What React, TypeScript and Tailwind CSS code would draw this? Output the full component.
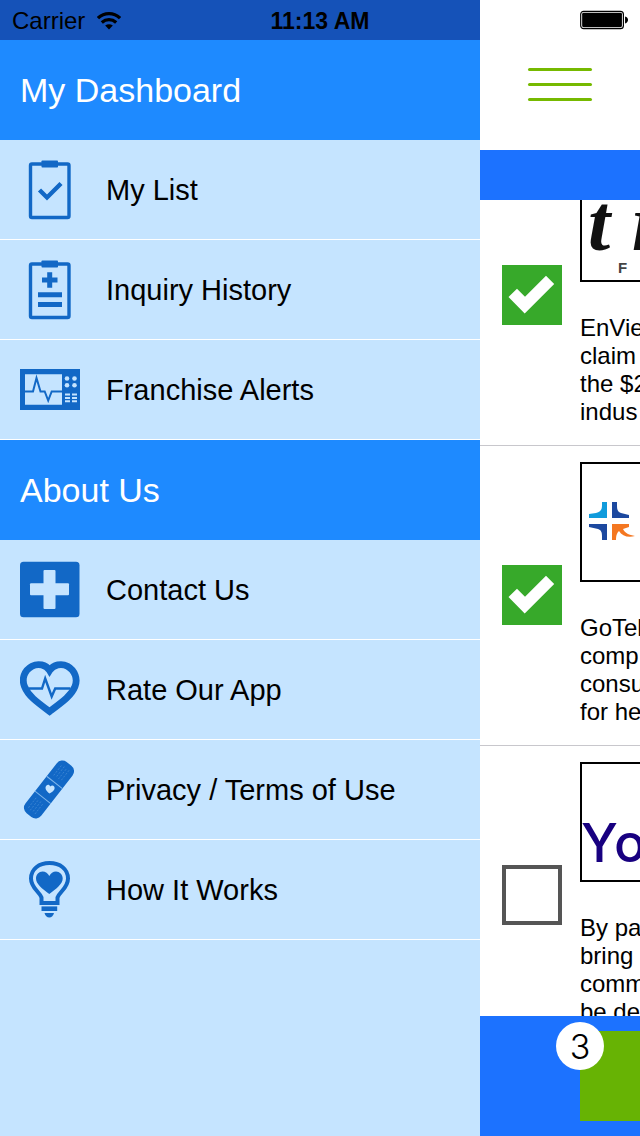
import { useState } from 'react';
import type { ReactNode } from 'react';

function ClipboardFrame({ children }: { children: ReactNode }) {
  return (
    <svg viewBox="0 0 60 60" className="size-15" fill="none" stroke="#1268c6" aria-hidden="true">
      <rect x="10.5" y="4" width="38.5" height="53.5" rx="1.5" strokeWidth="3.4" />
      <rect x="21.5" y="0.5" width="16.5" height="7" rx="0.8" fill="#1268c6" stroke="none" />
      {children}
    </svg>
  );
}

function ListIcon() {
  return (
    <ClipboardFrame>
      <path d="M19.5 30 27 37.5 41 23.5" strokeWidth="4.4" />
    </ClipboardFrame>
  );
}

function HistoryIcon() {
  return (
    <ClipboardFrame>
      <path d="M22 20h15.5M29.7 12.3v15.4M18 34.8h24M18 44.5h24" strokeWidth="5" />
    </ClipboardFrame>
  );
}

function MonitorIcon() {
  return (
    <svg viewBox="0 0 60 60" className="size-15" fill="none" aria-hidden="true">
      <path d="M0 9h60v41H0z" fill="#1268c6" />
      <path d="M5 14.3h37v30.4H5z" fill="#c5e4ff" />
      <path d="M5 31.5h8L16.5 18l4 13.500h4.2l3.500 9 3.500-9H42" stroke="#1268c6" strokeWidth="2" />
      <g fill="#c5e4ff">
        <circle cx="47" cy="18.5" r="2.3" />
        <circle cx="54.5" cy="18.5" r="2.3" />
        <circle cx="47" cy="25.2" r="2.3" />
        <circle cx="54.5" cy="25.2" r="2.3" />
      </g>
      <path
        d="M45 34.5h5M52 34.5h5M45 38h5M52 38h5M45 41.3h5M52 41.3h5"
        stroke="#c5e4ff"
        strokeWidth="2"
      />
    </svg>
  );
}

function ContactIcon() {
  return (
    <svg viewBox="0 0 60 60" className="size-15" aria-hidden="true">
      <rect y="1.7" width="59.5" height="55.5" rx="3.5" fill="#1268c6" />
      <rect x="23.5" y="10" width="12" height="39" rx="1" fill="#c5e4ff" />
      <rect x="10" y="23.2" width="39" height="12" rx="1" fill="#c5e4ff" />
    </svg>
  );
}

function HeartIcon() {
  return (
    <svg viewBox="0 0 60 60" className="size-15" fill="none" stroke="#1268c6" aria-hidden="true">
      <path
        d="M29.6 10.5C26 4.5 18 3 12 6.2 4 10.5 1.5 19 4.5 26.5 8 35.5 16 41.5 29.6 51.5 43 41.5 51.5 35.5 55 26.5 58 19 55 10.5 47.5 6.2 41.5 3 33.5 4.5 29.6 10.5z"
        strokeWidth="6.8"
      />
      <path d="M9 28.5h13l3.200-10 6.500 18 3.500-8h15" strokeWidth="2.4" />
    </svg>
  );
}

function BandageIcon() {
  return (
    <svg viewBox="0 0 60 60" className="size-15" aria-hidden="true">
      <g transform="translate(29 29.5) rotate(-52)">
        <rect x="-32.5" y="-10" width="65" height="20" rx="7" fill="#1268c6" />
        <path d="M-10-10v20M9-10v20" stroke="#7fb5ea" strokeWidth="1" />
        <path
          d="M-27-5h13M-28-2h13M-27 1h13M-28 4h13M14-5h13M15-2h13M14 1h13M15 4h13"
          stroke="#3f87d4"
          strokeWidth="0.8"
          strokeDasharray="2 1.5"
        />
      </g>
      <path d="M29.5 33.5c-4-3-5-6-3-8 1.500-1.300 3-.5 3.800 1 1.200-1.500 3-1.500 4 .2 1.200 2.500-1 4.800-4.800 6.800z" fill="#c5e4ff" />
    </svg>
  );
}

function BulbIcon() {
  return (
    <svg viewBox="0 0 60 60" className="size-15" fill="none" aria-hidden="true">
      <path
        d="M21.5 43v-5.500C19 31 11 28 11 18.500 11 9 19 3 29.500 3S48 9 48 18.500C48 28 40 31 37.500 37.500V43z"
        stroke="#1268c6"
        strokeWidth="4"
      />
      <path
        d="M29.300 34C22 28.500 16 24 16 18.500c0-4 3-7 6.500-7 3 0 5.500 1.800 6.800 4.500 1.300-2.700 3.800-4.500 6.700-4.500 3.500 0 6.700 3 6.700 7C42.700 24 36.500 28.500 29.300 34z"
        fill="#1268c6"
      />
      <path d="M21.5 48.7h15.7" stroke="#1268c6" strokeWidth="4.6" />
      <path d="M24.5 53h9.500c-.5 2.600-2.500 4.500-4.700 4.500S25 55.600 24.500 53z" fill="#1268c6" />
    </svg>
  );
}

const sections = [
  {
    title: 'My Dashboard',
    items: [
      { label: 'My List', icon: <ListIcon /> },
      { label: 'Inquiry History', icon: <HistoryIcon /> },
      { label: 'Franchise Alerts', icon: <MonitorIcon /> },
    ],
  },
  {
    title: 'About Us',
    items: [
      { label: 'Contact Us', icon: <ContactIcon /> },
      { label: 'Rate Our App', icon: <HeartIcon /> },
      { label: 'Privacy / Terms of Use', icon: <BandageIcon /> },
      { label: 'How It Works', icon: <BulbIcon /> },
    ],
  },
];

function EnViewLogo() {
  return (
    <svg viewBox="0 0 64 116" className="h-29 w-16" aria-hidden="true">
      <text x="6 50" y="86" fontSize="80" fontStyle="italic" fontWeight="bold" fontFamily="Liberation Serif, serif" fill="#111">
        tr
      </text>
      <text x="36" y="109" fontSize="15" fontWeight="bold" fontFamily="Liberation Sans, sans-serif" fill="#444">
        F
      </text>
    </svg>
  );
}

function GoTeleLogo() {
  return (
    <svg viewBox="0 0 64 116" className="h-29 w-16" aria-hidden="true">
      <path d="M20 38h5v16H7v-4l7-1c4-1 6-3 6-7z" fill="#109bdc" />
      <path d="M30 38h5v4c0 4 1 6 4 7l8 2v3H30z" fill="#1c489f" />
      <path d="M7 60h18v16h-5v-4c0-4-1-6-4-7l-9-2z" fill="#1c489f" />
      <path d="M30 60h17v3l-6 2c2 4 6 6 12 7-7 2-13 0-16-5-2 2-3 4-3 9h-4z" fill="#f47721" />
    </svg>
  );
}

function YoLogo() {
  return (
    <svg viewBox="0 0 64 116" className="h-29 w-16" aria-hidden="true">
      <text x="-1 32" y="98" fontSize="53" fontWeight="500" fontFamily="Inter, sans-serif" fill="#180080">
        Yo
      </text>
    </svg>
  );
}

const franchises = [
  { name: 'EnView', logo: <EnViewLogo />, lines: ['EnVie', 'claim', 'the $2', 'indus'] },
  { name: 'GoTele', logo: <GoTeleLogo />, lines: ['GoTel', 'comp', 'consu', 'for he'] },
  { name: 'Yo', logo: <YoLogo />, lines: ['By pa', 'bring', 'comm', 'be de'] },
];

function StatusBar() {
  return (
    <div className="absolute inset-x-0 top-0 z-10 grid h-10 grid-cols-3 items-center px-3 text-black">
      <div className="flex items-center gap-3 pt-0.5">
        <span className="text-2xl">Carrier</span>
        <svg viewBox="0 0 25 19" className="h-5 w-6" fill="none" stroke="#000" aria-hidden="true">
          <path d="M1 6.5C7.5.2 17.5.2 24 6.5M5 11c4.500-4 10.500-4 15 0" strokeWidth="3.4" />
          <path d="M8.500 14.300c2.500-2 5.500-2 8 0l-4 4z" fill="#000" stroke="none" />
        </svg>
      </div>
      <span className="pt-0.5 text-center text-[23px] font-bold">11:13 AM</span>
      <svg viewBox="0 0 49 19" className="h-5 w-12 justify-self-end" aria-hidden="true">
        <rect x="0.7" y="0.7" width="43.6" height="17.6" rx="3" fill="none" stroke="#000" strokeWidth="1.2" />
        <rect x="2.2" y="2.2" width="40.6" height="14.6" rx="1.5" />
        <path d="M46 6c4 1 4 6 0 7z" />
      </svg>
    </div>
  );
}

function Drawer() {
  return (
    <nav className="w-3/4 shrink-0 bg-[#c5e4ff]">
      <div className="h-10 bg-[#1552b8]" />
      {sections.map((section) => (
        <section key={section.title}>
          <h2 className="flex h-25 items-center bg-[#1e8aff] px-5 text-[34px] text-white">{section.title}</h2>
          <ul>
            {section.items.map((item) => (
              <li key={item.label} className="border-b border-white">
                <a href="#" className="flex h-[99px] items-center gap-[26px] px-5 text-[29px] text-black">
                  {item.icon}
                  <span className="pt-0.5">{item.label}</span>
                </a>
              </li>
            ))}
          </ul>
        </section>
      ))}
    </nav>
  );
}

function CheckBox({ label, checked, onChange }: { label: string; checked: boolean; onChange: () => void }) {
  return (
    <label className="grid size-15 shrink-0 cursor-pointer">
      <input
        type="checkbox"
        aria-label={label}
        checked={checked}
        onChange={onChange}
        className="col-start-1 row-start-1 size-15 appearance-none border-4 border-[#555] checked:border-0 checked:bg-[#37a92a]"
      />
      {checked && (
        <svg viewBox="0 0 60 60" className="pointer-events-none col-start-1 row-start-1 size-15" aria-hidden="true">
          <path d="M6.5 32 15 23.7l8 8 21-21 8.200 8.300-29.500 29.400z" fill="#fff" />
        </svg>
      )}
    </label>
  );
}

export default function App() {
  const [selected, setSelected] = useState([true, true, false]);

  const toggle = (index: number) => {
    setSelected(selected.map((value, i) => (i === index ? !value : value)));
  };

  return (
    <div className="relative flex h-screen overflow-hidden bg-white font-['Liberation_Sans',sans-serif]">
      <StatusBar />
      <Drawer />
      <main className="flex min-w-0 flex-1 flex-col overflow-hidden">
        <header className="shrink-0">
          <div className="flex h-[150px] items-center px-12 pt-[18px]">
            <button type="button" aria-label="Menu" className="flex w-16 flex-col gap-3">
              <span className="h-[3px] w-full rounded-full bg-[#76b900]" />
              <span className="h-[3px] w-full rounded-full bg-[#76b900]" />
              <span className="h-[3px] w-full rounded-full bg-[#76b900]" />
            </button>
          </div>
          <div className="h-[50px] bg-[#1c72ff]" />
        </header>
        {/* last row runs on under the footer */}
        <ul className="-mb-[30px] flex min-h-0 flex-1 flex-col justify-end overflow-hidden">
          {franchises.map((item, index) => (
            <li
              key={item.name}
              className="flex h-75 shrink-0 items-center gap-[18px] border-b border-[#c8c7cc] pb-px pl-[22px]"
            >
              <CheckBox label={item.name} checked={selected[index]} onChange={() => toggle(index)} />
              <div className="flex h-full flex-col gap-8 pt-4">
                <div className="w-60 border-2 border-black bg-white">{item.logo}</div>
                <p className="text-2xl leading-7">
                  {item.lines.map((line) => (
                    <span key={line} className="block whitespace-nowrap">
                      {line}
                    </span>
                  ))}
                </p>
              </div>
            </li>
          ))}
        </ul>
        <footer className="relative z-10 flex h-30 shrink-0 bg-[#1c72ff] py-[15px] pl-25">
          <button type="button" aria-label="Request information" className="relative h-full flex-1 bg-[#67b304]">
            <span className="absolute -left-6 -top-[9px] flex size-12 items-center justify-center rounded-full bg-white font-['Inter',sans-serif] text-[34px] font-light text-black">
              3
            </span>
          </button>
        </footer>
      </main>
    </div>
  );
}
